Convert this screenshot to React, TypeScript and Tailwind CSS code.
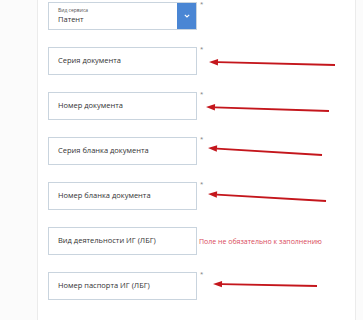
const fields = [
  { label: "Серия документа", star: true },
  { label: "Номер документа", star: true },
  { label: "Серия бланка документа", star: true },
  { label: "Номер бланка документа", star: true },
  { label: "Вид деятельности ИГ (ЛБГ)", star: false, note: "Поле не обязательно к заполнению" },
  { label: "Номер паспорта ИГ (ЛБГ)", star: true },
]

// annotation arrows: head (x1,y1) <- tail (x2,y2)
const arrows = [
  [209, 62, 335, 65],
  [206, 107, 329, 111],
  [208, 148, 322, 155],
  [208, 194, 326, 201],
  [213, 284, 317, 286],
]

function Arrow({ x1, y1, x2, y2 }: { x1: number; y1: number; x2: number; y2: number }) {
  const a = Math.atan2(y2 - y1, x2 - x1)
  const len = 9
  const w = 3.2
  const bx = x1 + Math.cos(a) * len
  const by = y1 + Math.sin(a) * len
  const px = -Math.sin(a) * w
  const py = Math.cos(a) * w
  return (
    <g>
      <line x1={bx} y1={by} x2={x2} y2={y2} stroke="#c4161c" strokeWidth={1.8} />
      <polygon points={`${x1},${y1} ${bx + px},${by + py} ${bx - px},${by - py}`} fill="#c4161c" />
    </g>
  )
}

export default function App() {
  return (
    <div
      className="relative h-[320px] w-[363px] overflow-hidden bg-[#fbfbfb]"
      style={{ fontFamily: '"Open Sans", "Noto Sans", sans-serif' }}
    >
      <div className="ml-[37px] flex h-full w-[319px] flex-col gap-[17px] border-x border-[#ebebeb] bg-white pl-[10px] pt-[2px]">
        <div className="flex items-start">
          <div className="flex h-[28px] w-[149px] border border-[#c9d4de] bg-white">
            <div className="flex flex-1 flex-col justify-center pl-[9px] leading-none">
              <span className="text-[5px] text-[#555]">Вид сервиса</span>
              <span className="mt-[3px] text-[7.5px] text-[#333]">Патент</span>
            </div>
            <div className="flex w-[19px] items-center justify-center bg-[#4a86d4]">
              <svg width="6" height="4" viewBox="0 0 6 4">
                <path d="M0.8 0.8 L3 3 L5.2 0.8" fill="none" stroke="#fff" strokeWidth="1.1" />
              </svg>
            </div>
          </div>
          <span className="ml-[3px] mt-[-1px] text-[6px] leading-none text-[#777]">*</span>
        </div>
        {fields.map((f) => (
          <div key={f.label} className="flex items-start">
            <div className="flex h-[28px] w-[149px] items-center border border-[#c9d4de] bg-white pl-[9px]">
              <span className="text-[7.5px] leading-none text-[#333]">{f.label}</span>
            </div>
            {f.star && (
              <span className="ml-[3px] mt-[-1px] text-[6px] leading-none text-[#777]">*</span>
            )}
            {f.note && (
              <span className="ml-[2px] self-center text-[7px] leading-none text-[#d94a5a]">
                {f.note}
              </span>
            )}
          </div>
        ))}
      </div>
      <svg className="pointer-events-none absolute left-0 top-0" width="363" height="320">
        {arrows.map(([x1, y1, x2, y2], i) => (
          <Arrow key={i} x1={x1} y1={y1} x2={x2} y2={y2} />
        ))}
      </svg>
    </div>
  )
}
